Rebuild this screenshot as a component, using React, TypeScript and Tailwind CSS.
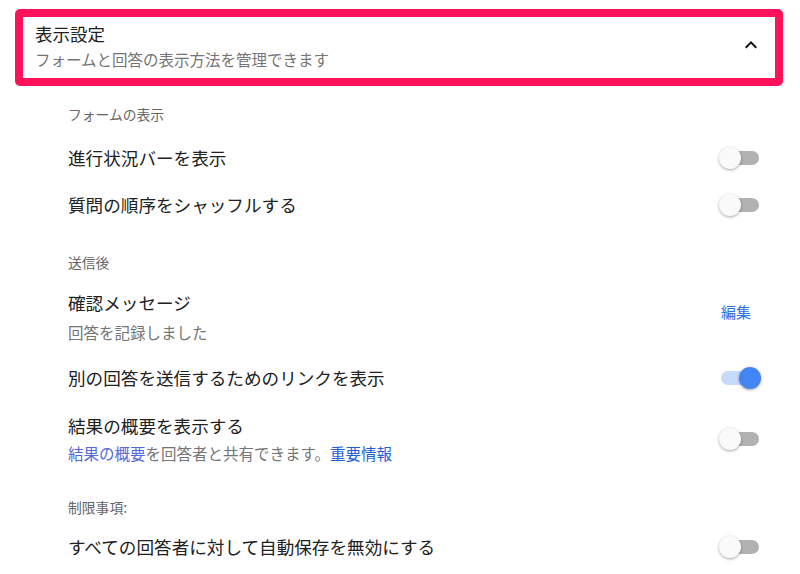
import { useState } from 'react';

const font = { fontFamily: '"Noto Sans CJK JP", "Noto Sans", sans-serif' };

type ToggleProps = { on: boolean; onChange: () => void };

const Toggle = ({ on, onChange }: ToggleProps) => (
  <button onClick={onChange} className="relative w-[42px] h-[22px] shrink-0">
    <span
      className={`absolute left-[2px] top-[4px] w-[38px] h-[14px] rounded-full ${
        on ? 'bg-[#c6dafc]' : 'bg-[#b2b2b2]'
      }`}
    />
    <span
      className={`absolute top-0 w-[22px] h-[22px] rounded-full shadow-[0_1px_3px_rgba(0,0,0,0.35)] ${
        on ? 'left-[20px] bg-[#4285f4]' : 'left-0 bg-[#fafafa]'
      }`}
    />
  </button>
);

const SectionLabel = ({ text, className }: { text: string; className: string }) => (
  <div className={`text-[13.8px] leading-[20px] text-[#666] ${className}`}>{text}</div>
);

export default function App() {
  const [toggles, setToggles] = useState({
    progress: false,
    shuffle: false,
    another: true,
    summary: false,
    autosave: false,
  });

  const flip = (key: keyof typeof toggles) =>
    setToggles((t) => ({ ...t, [key]: !t[key] }));

  return (
    <div className="w-[800px] h-[574px] bg-white overflow-hidden" style={font}>
      <div className="pt-[9px] pl-[15px] pr-[17px]">
        <div className="h-[77px] border-[8px] border-[#ff1259] rounded-[5px] flex items-center pl-[12px] pr-[12px]">
          <div className="flex-1 flex flex-col -mt-[4px]">
            <span className="text-[17.5px] leading-[24px] text-[#212121]">表示設定</span>
            <span className="mt-[3px] text-[15.5px] leading-[20px] text-[#757575]">
              フォームと回答の表示方法を管理できます
            </span>
          </div>
          <svg width="24" height="24" viewBox="0 0 24 24" className="-mt-[5px]">
            <path d="M7.41 15.41L12 10.83l4.59 4.58L18 14l-6-6-6 6z" fill="#111" />
          </svg>
        </div>
      </div>

      <div className="pl-[68px] pr-[39px] text-[#212121]">
        <SectionLabel text="フォームの表示" className="pt-[18px] pb-[10px]" />

        <div className="h-[48px] flex items-center justify-between">
          <span className="text-[17.6px]">進行状況バーを表示</span>
          <Toggle on={toggles.progress} onChange={() => flip('progress')} />
        </div>
        <div className="h-[46px] flex items-center justify-between">
          <span className="text-[17.6px]">質問の順序をシャッフルする</span>
          <Toggle on={toggles.shuffle} onChange={() => flip('shuffle')} />
        </div>

        <SectionLabel text="送信後" className="pt-[24px] pb-[19px]" />

        <div className="flex justify-between pb-[11px]">
          <div className="flex flex-col">
            <span className="text-[17.6px] leading-[24px]">確認メッセージ</span>
            <span className="mt-[6px] text-[15.5px] leading-[22px] text-[#757575]">
              回答を記録しました
            </span>
          </div>
          <a href="#" className="mt-[9px] mr-[10px] text-[15px] leading-[24px] text-[#2a6ee8]">
            編集
          </a>
        </div>

        <div className="h-[48px] flex items-center justify-between">
          <span className="text-[17.6px]">別の回答を送信するためのリンクを表示</span>
          <Toggle on={toggles.another} onChange={() => flip('another')} />
        </div>

        <div className="flex items-center justify-between pt-[12px] pb-[12px]">
          <div className="flex flex-col">
            <span className="text-[17.6px] leading-[24px]">結果の概要を表示する</span>
            <span className="mt-[4px] text-[15.5px] leading-[22px] text-[#757575]">
              <a href="#" className="text-[#5468dc]">結果の概要</a>
              を回答者と共有できます。
              <a href="#" className="text-[#1d5fd6]">重要情報</a>
            </span>
          </div>
          <Toggle on={toggles.summary} onChange={() => flip('summary')} />
        </div>

        <SectionLabel text="制限事項:" className="pt-[21px] pb-[6px]" />

        <div className="h-[48px] flex items-center justify-between">
          <span className="text-[17.6px]">すべての回答者に対して自動保存を無効にする</span>
          <Toggle on={toggles.autosave} onChange={() => flip('autosave')} />
        </div>
      </div>
    </div>
  );
}
